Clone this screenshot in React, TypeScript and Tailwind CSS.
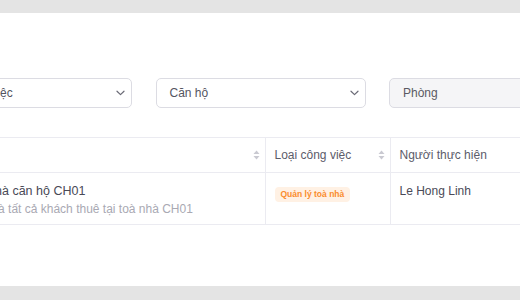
import { useState } from 'react';

interface Task {
  id: string;
  title: string;
  description: string;
  type: string;
  assignee: string;
}

const tasks: Task[] = [
  {
    id: '1',
    title: 'Thông báo toà nhà căn hộ CH01',
    description: 'Thông báo toà nhà tất cả khách thuê tại toà nhà CH01',
    type: 'Quản lý toà nhà',
    assignee: 'Le Hong Linh',
  },
];

function Chevron() {
  return (
    <svg width="9" height="6" viewBox="0 0 9 6" fill="none" className="text-[#6b6b76]">
      <path d="M1 1.2l3.5 3.4L8 1.2" stroke="currentColor" strokeWidth="1.2" strokeLinecap="round" strokeLinejoin="round" />
    </svg>
  );
}

function SortIcon() {
  return (
    <svg width="7" height="10" viewBox="0 0 7 10" className="text-[#c9c9d1]">
      <path d="M3.5 0.5L6.5 4H0.5z" fill="currentColor" />
      <path d="M3.5 9.5L0.5 6h6z" fill="currentColor" />
    </svg>
  );
}

function Select({ value, disabled }: { value: string; disabled?: boolean }) {
  return (
    <div
      className={
        disabled
          ? 'h-[30px] w-[210px] shrink-0 rounded-[5px] border border-[#dcdce3] bg-[#f5f5f7] pl-[13px] flex items-center text-[12px] text-[#5a5a63]'
          : 'h-[30px] w-[210px] shrink-0 rounded-[5px] border border-[#dcdce3] bg-white pl-[13px] pr-[6px] flex items-center justify-between text-[12px] text-[#55555f]'
      }
    >
      <span>{value}</span>
      {!disabled && <Chevron />}
    </div>
  );
}

export default function App() {
  const [rows] = useState<Task[]>(tasks);

  return (
    <div className="w-[520px] h-[300px] overflow-hidden bg-[#e4e4e4] pt-[13px] pb-[14px] flex flex-col" style={{ fontFamily: '"Liberation Sans", Arial, sans-serif' }}>
      <div className="flex-1 bg-white overflow-hidden pt-[65px]">
        <div className="flex gap-[23.5px] -ml-[78px]">
          <Select value="Loại công việc" />
          <Select value="Căn hộ" />
          <Select value="Phòng" disabled />
        </div>

        <div className="mt-[29px] -ml-[105px] w-[660px]">
          <table className="w-full border-collapse text-[12px] table-fixed">
            <colgroup>
              <col className="w-[370px]" />
              <col className="w-[125px]" />
              <col />
            </colgroup>
            <thead>
              <tr className="h-[35px] border-y border-[#ebebf1]">
                <th className="pl-[9px] pr-[5px] text-left font-normal text-[#5c5c6a]">
                  <div className="flex items-center justify-between">
                    <span>Tiêu đề</span>
                    <SortIcon />
                  </div>
                </th>
                <th className="pl-[9px] pr-[5px] text-left font-normal text-[#5c5c6a] border-l border-[#ebebf1]">
                  <div className="flex items-center justify-between">
                    <span>Loại công việc</span>
                    <SortIcon />
                  </div>
                </th>
                <th className="px-[9px] text-left font-normal text-[#5c5c6a] border-l border-[#ebebf1]">
                  Người thực hiện
                </th>
              </tr>
            </thead>
            <tbody>
              {rows.map((row) => (
                <tr key={row.id} className="h-[52px] border-b border-[#ebebf1] align-top">
                  <td className="px-[9px] pt-[10px]">
                    <div className="text-[#494956] text-[12.5px] leading-[16px]">{row.title}</div>
                    <div className="text-[#a9a9b3] leading-[16px] mt-[2px]">{row.description}</div>
                  </td>
                  <td className="px-[9px] pt-[11px] border-l border-[#ebebf1]">
                    <span className="inline-flex items-center h-[15px] px-[6px] rounded-[4px] bg-[#fff1e4] text-[#fa8c2d] text-[8.5px] font-bold">
                      {row.type}
                    </span>
                  </td>
                  <td className="px-[9px] pt-[10px] border-l border-[#ebebf1] text-[#4a4a57] leading-[16px]">
                    {row.assignee}
                  </td>
                </tr>
              ))}
            </tbody>
          </table>
        </div>
      </div>
    </div>
  );
}
